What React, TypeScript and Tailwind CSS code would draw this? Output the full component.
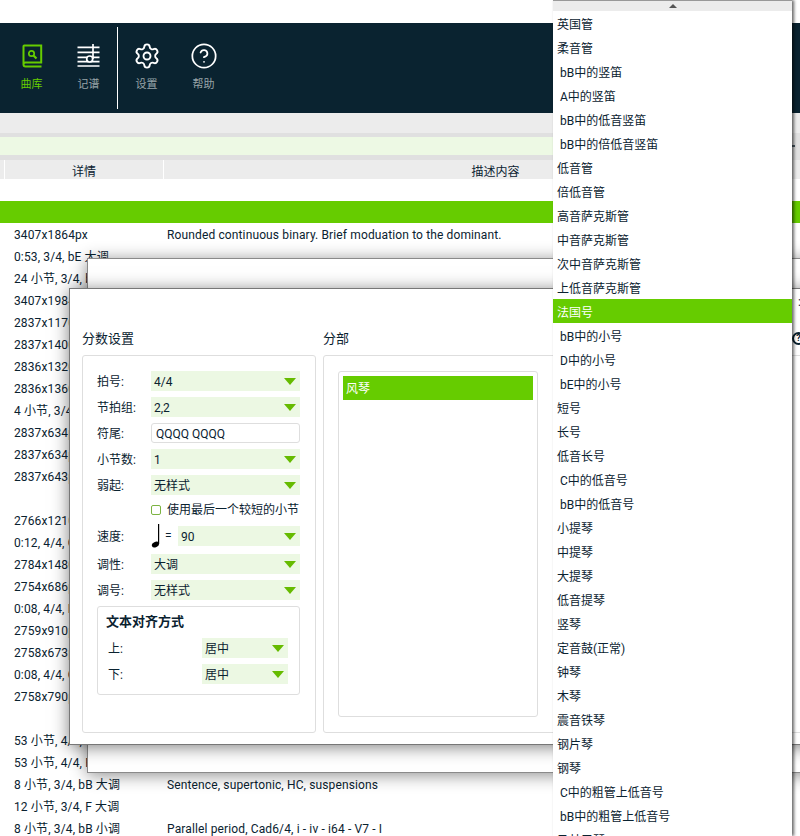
import { Settings, CircleHelp } from "lucide-react";

const rows: [string, string][] = [
  ["3407x1864px", "Rounded continuous binary. Brief moduation to the dominant."],
  ["0:53, 3/4, bE 大调", ""],
  ["24 小节, 3/4, bE 大调", ""],
  ["3407x1984px", ""],
  ["2837x1170px", ""],
  ["2837x1400px", ""],
  ["2836x1320px", ""],
  ["2836x1360px", ""],
  ["4 小节, 3/4, C 大调", ""],
  ["2837x634px", ""],
  ["2837x634px", ""],
  ["2837x643px", ""],
  ["", ""],
  ["2766x1210px", ""],
  ["0:12, 4/4, C 大调", ""],
  ["2784x1480px", ""],
  ["2754x686px", ""],
  ["0:08, 4/4, D 大调", ""],
  ["2759x910px", ""],
  ["2758x673px", ""],
  ["0:08, 4/4, C 大调", ""],
  ["2758x790px", ""],
  ["", ""],
  ["53 小节, 4/4, F 大调", ""],
  ["53 小节, 4/4, F 大调", ""],
  ["8 小节, 3/4, bB 大调", "Sentence, supertonic, HC, suspensions"],
  ["12 小节, 3/4, F 大调", ""],
  ["8 小节, 3/4, bB 小调", "Parallel period, Cad6/4, i - iv - i64 - V7 - I"],
];

const instruments: [string, boolean][] = [
  ["英国管", false],
  ["柔音管", false],
  ["bB中的竖笛", true],
  ["A中的竖笛", true],
  ["bB中的低音竖笛", true],
  ["bB中的倍低音竖笛", true],
  ["低音管", false],
  ["倍低音管", false],
  ["高音萨克斯管", false],
  ["中音萨克斯管", false],
  ["次中音萨克斯管", false],
  ["上低音萨克斯管", false],
  ["法国号", false],
  ["bB中的小号", true],
  ["D中的小号", true],
  ["bE中的小号", true],
  ["短号", false],
  ["长号", false],
  ["低音长号", false],
  ["C中的低音号", true],
  ["bB中的低音号", true],
  ["小提琴", false],
  ["中提琴", false],
  ["大提琴", false],
  ["低音提琴", false],
  ["竖琴", false],
  ["定音鼓(正常)", false],
  ["钟琴", false],
  ["木琴", false],
  ["震音铁琴", false],
  ["钢片琴", false],
  ["钢琴", false],
  ["C中的粗管上低音号", true],
  ["bB中的粗管上低音号", true],
  ["马林巴琴", false],
];

function Arrow() {
  return (
    <svg width="12" height="7" viewBox="0 0 12 7" className="shrink-0">
      <polygon points="0,0 12,0 6,7" fill="#66bb00" />
    </svg>
  );
}

function Select({ value, className }: { value: string; className: string }) {
  return (
    <div className={`flex h-[20px] items-center justify-between bg-[#ecf8e3] pl-[3px] pr-[4px] ${className}`}>
      <span className="pt-[2px]">{value}</span>
      <Arrow />
    </div>
  );
}

function FormRow({ label, value }: { label: string; value: string }) {
  return (
    <div className="flex h-[20px] items-center">
      <span className="w-[54px] shrink-0 pt-[2px]">{label}</span>
      <Select value={value} className="w-[149px]" />
    </div>
  );
}

function NavItem({ label, active, children }: { label: string; active?: boolean; children: React.ReactNode }) {
  return (
    <div className="flex w-[57px] flex-col items-center pt-[19px]">
      <div className="flex h-[28px] w-[28px] items-center justify-center">{children}</div>
      <span className={`mt-[7px] text-[11px] leading-[16px] ${active ? "text-[#66cc00]" : "text-[#98a3a8]"}`}>
        {label}
      </span>
    </div>
  );
}

export default function App() {
  return (
    <div className="relative h-[836px] w-[800px] overflow-hidden bg-white font-['Roboto','Noto_Sans_CJK_SC',sans-serif] text-[12px] text-[#0a2230]">
      {/* Page */}
      <div className="h-[23px]" />
      <nav className="flex h-[90px] bg-[#0a2330] pl-[3px]">
        <NavItem label="曲库" active>
          <svg width="28" height="28" viewBox="0 0 28 28" fill="none" stroke="#66cc00">
            <path d="M5.5 22.5V4.2Q5.5 3.5 6.2 3.5H23.2V20.5H7.5Q5.5 20.5 5.5 22.5Q5.5 24.5 7.5 24.5H23.5" strokeWidth="2" />
            <circle cx="13.5" cy="11.5" r="2.7" strokeWidth="1.7" />
            <path d="M15.5 13.5L18.5 16.5" strokeWidth="2.2" />
          </svg>
        </NavItem>
        <NavItem label="记谱">
          <svg width="28" height="28" viewBox="0 0 28 28" fill="none" stroke="#ffffff" strokeWidth="1.7">
            <path d="M2.5 5.3H24.5M2.5 10.3H24.5M2.5 15.3H24.5M2.5 19.7H24.5M2.5 24H24.5" />
            <path d="M18 2V17" />
            <circle cx="14.7" cy="17" r="3" fill="#0a2330" />
          </svg>
        </NavItem>
        <div className="my-[4px] w-px bg-white" />
        <NavItem label="设置">
          <Settings size={28} color="#ffffff" strokeWidth={1.6} />
        </NavItem>
        <NavItem label="帮助">
          <CircleHelp size={28} color="#ffffff" strokeWidth={1.5} />
        </NavItem>
      </nav>
      <div className="h-[20px] bg-[#ececec]" />
      <div className="flex h-[27px] flex-col bg-[#e0e0e0] py-[4px]">
        <div className="flex h-[18px] items-center">
          <div className="h-full flex-1 bg-[#edf9e4]" />
          <div className="flex w-[30px] items-center justify-end">
            <div className="mr-[5px] h-[2px] w-[4px] bg-[#4a5a64]" />
          </div>
        </div>
      </div>
      <div className="flex h-[19px] w-[900px] bg-[#ececec] leading-[24px]">
        <div className="w-[5px] border-r border-white" />
        <div className="w-[159px] border-r border-white text-center">详情</div>
        <div className="w-[663px] text-center">描述内容</div>
      </div>
      <div className="h-[22px]" />
      <div className="h-[22px] bg-[#66cc00]" />
      <div className="flex flex-col tracking-[0.13px]">
        {rows.map(([a, b], i) => (
          <div key={i} className="flex h-[22px] items-center whitespace-nowrap pt-[2px]">
            <span className="w-[167px] shrink-0 pl-[14px]">{a}</span>
            <span>{b}</span>
          </div>
        ))}
      </div>

      {/* Back dialog */}
      <div className="absolute left-[87px] top-[258px] h-[515px] w-[760px] border border-[#8a8a8a] bg-white shadow-[0_2px_16px_rgba(0,0,0,0.45)]" />

      {/* Front dialog */}
      <div className="absolute left-[69px] top-[288px] flex h-[457px] w-[780px] gap-[7px] border border-[#777777] bg-white pl-[12px] pt-[40px] shadow-[0_2px_16px_rgba(0,0,0,0.5)]">
        <section className="flex w-[234px] flex-col">
          <h2 className="mb-[6px] h-[20px] text-[13px] font-normal leading-[20px]">分数设置</h2>
          <div className="flex h-[378px] flex-col gap-[6px] rounded-[3px] border border-[#dedede] pl-[14px] pt-[15px]">
            <FormRow label="拍号:" value="4/4" />
            <FormRow label="节拍组:" value="2,2" />
            <div className="flex h-[20px] items-center">
              <span className="w-[54px] shrink-0 pt-[2px]">符尾:</span>
              <div className="flex h-[20px] w-[149px] items-center rounded-[3px] border border-[#dedede] pl-[4px] pt-[2px]">
                QQQQ QQQQ
              </div>
            </div>
            <FormRow label="小节数:" value="1" />
            <FormRow label="弱起:" value="无样式" />
            <div className="flex h-[17px] items-center pl-[54px]">
              <span className="mr-[6px] h-[10px] w-[10px] rounded-[2px] border border-[#7cb342]" />
              <span>使用最后一个较短的小节</span>
            </div>
            <div className="flex h-[24px] items-center">
              <span className="w-[54px] shrink-0 pt-[2px]">速度:</span>
              <svg width="11" height="24" viewBox="0 0 11 24" className="shrink-0">
                <path d="M7.6 0V20" stroke="#000000" strokeWidth="1.2" />
                <ellipse cx="4.4" cy="20.6" rx="3.7" ry="2.6" transform="rotate(-25 4.4 20.6)" fill="#000000" />
              </svg>
              <span className="w-[16px] shrink-0 pl-[3px]">=</span>
              <Select value="90" className="w-[122px]" />
            </div>
            <FormRow label="调性:" value="大调" />
            <FormRow label="调号:" value="无样式" />
            <div className="flex h-[89px] w-[203px] flex-col rounded-[3px] border border-[#dedede] pl-[8px] pt-[5px]">
              <h3 className="h-[21px] text-[13px] font-bold leading-[20px]">文本对齐方式</h3>
              <div className="mt-[5px] flex flex-col gap-[6px]">
                <div className="flex h-[20px] items-center">
                  <span className="w-[96px] shrink-0 pl-[2px] pt-[2px]">上:</span>
                  <Select value="居中" className="w-[86px]" />
                </div>
                <div className="flex h-[20px] items-center">
                  <span className="w-[96px] shrink-0 pl-[2px] pt-[2px]">下:</span>
                  <Select value="居中" className="w-[86px]" />
                </div>
              </div>
            </div>
          </div>
        </section>
        <section className="flex flex-1 flex-col">
          <h2 className="mb-[6px] h-[20px] text-[13px] font-normal leading-[20px]">分部</h2>
          <div className="h-[378px] rounded-[3px] border border-[#dedede] pl-[14px] pt-[15px]">
            <div className="h-[346px] w-[200px] rounded-[3px] border border-[#dedede] p-[4px]">
              <div className="flex h-[24px] items-center bg-[#66cc00] pl-[3px] pt-[2px] text-white">风琴</div>
            </div>
          </div>
        </section>
        <span className="absolute left-[728px] top-[5px] leading-[16px]">:</span>
        <div className="absolute left-[722px] top-[43px] flex h-[13px] w-[13px] items-center justify-center rounded-full border-2 border-[#0a2230] text-[9px] font-bold">
          ?
        </div>
      </div>

      {/* Instrument dropdown */}
      <div className="absolute left-[553px] top-0 flex h-[836px] w-[239px] flex-col overflow-hidden bg-white shadow-[2px_0_3px_rgba(0,0,0,0.6)]">
        <div className="flex h-[11px] shrink-0 items-center justify-center border-t border-[#999999] bg-[#ececec]">
          <svg width="8" height="4" viewBox="0 0 8 4">
            <polygon points="0,4 8,4 4,0" fill="#555555" />
          </svg>
        </div>
        {instruments.map(([name, indented]) => (
          <div
            key={name}
            className={`flex h-[24px] shrink-0 items-center whitespace-nowrap pt-[3px] ${indented ? "pl-[7px]" : "pl-[4px]"} ${name === "法国号" ? "bg-[#66cc00] text-white" : ""}`}
          >
            {name}
          </div>
        ))}
      </div>
    </div>
  );
}
